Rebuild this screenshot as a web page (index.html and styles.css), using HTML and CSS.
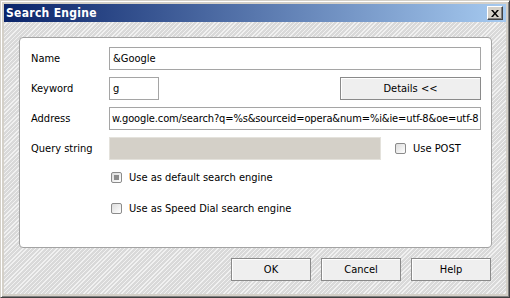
FILE: index.html
```html
<!DOCTYPE html>
<html lang="en">
<head>
  <meta charset="utf-8">
  <title>Search Engine</title>
  <link rel="stylesheet" href="styles.css">
</head>
<body>
  <div class="window">
    <div class="titlebar">
      <span class="title">Search Engine</span>
      <button class="close-button">
        <svg width="8" height="7" viewBox="0 0 8 7"><path d="M0 0h2l2 2.5L6 0h2L5 3.5 8 7H6L4 4.5 2 7H0l3-3.5z" fill="#000"/></svg>
      </button>
    </div>
    <div class="content">
      <div class="panel">
        <div class="row">
          <label class="field-label">Name</label>
          <div class="text-input wide">&amp;Google</div>
        </div>
        <div class="row">
          <label class="field-label">Keyword</label>
          <div class="text-input short">g</div>
          <button class="push-button details-button">Details &lt;&lt;</button>
        </div>
        <div class="row">
          <label class="field-label">Address</label>
          <div class="text-input wide address">w.google.com/search?q=%s&amp;sourceid=opera&amp;num=%i&amp;ie=utf-8&amp;oe=utf-8</div>
        </div>
        <div class="row">
          <label class="field-label">Query string</label>
          <div class="text-input disabled"></div>
          <span class="checkbox post-check"></span>
          <span class="check-label">Use POST</span>
        </div>
        <div class="option first-option">
          <span class="checkbox checked"></span>
          <span class="check-label">Use as default search engine</span>
        </div>
        <div class="option">
          <span class="checkbox"></span>
          <span class="check-label">Use as Speed Dial search engine</span>
        </div>
      </div>
      <div class="button-bar">
        <button class="push-button">OK</button>
        <button class="push-button">Cancel</button>
        <button class="push-button">Help</button>
      </div>
    </div>
  </div>
</body>
</html>
```
FILE: styles.css
```css
body {
  margin: 0;
  padding: 0;
  font-family: 'DejaVu Sans Condensed', 'DejaVu Sans', sans-serif;
  font-size: 11px;
  color: #000;
  background-color: #d4d0c8;
}
.window {
  width: 510px;
  height: 298px;
  box-sizing: border-box;
  display: flex;
  flex-direction: column;
  padding: 3px;
  background-color: #d4d0c8;
  border: 1px solid;
  border-color: #d4d0c8 #404040 #404040 #d4d0c8;
  box-shadow: inset 1px 1px #ffffff, inset -1px -1px #808080;
}
.titlebar {
  height: 18px;
  display: flex;
  align-items: center;
  justify-content: space-between;
  padding: 0 3px 0 2px;
  background: linear-gradient(to right, #0a246a, #a6caf0);
}
.title {
  color: #fff;
  font-weight: bold;
  font-size: 12px;
  letter-spacing: 0.3px;
}
.close-button {
  width: 16px;
  height: 14px;
  padding: 0;
  display: flex;
  align-items: center;
  justify-content: center;
  background-color: #d4d0c8;
  border: 1px solid;
  border-color: #ffffff #404040 #404040 #ffffff;
  box-shadow: inset -1px -1px #808080;
}
.content {
  flex-grow: 1;
  display: flex;
  flex-direction: column;
  padding: 15px 14px 0 15px;
  background: repeating-linear-gradient(135deg, #d9d9d9 0 2px, #f1f1f1 2px 3px);
}
.panel {
  height: 211px;
  box-sizing: border-box;
  padding: 9px 10px 0 11px;
  background-color: #fff;
  border: 1px solid #a3a3a3;
  border-radius: 4px;
}
.row {
  height: 23px;
  display: flex;
  align-items: center;
  margin-bottom: 7px;
}
.field-label {
  width: 78px;
  flex-shrink: 0;
}
.text-input {
  height: 23px;
  box-sizing: border-box;
  display: flex;
  align-items: center;
  padding: 0 3px;
  border: 1px solid #a5a5a5;
  background-color: #fff;
  white-space: nowrap;
  overflow: hidden;
}
.wide {
  flex-grow: 1;
}
.address {
  padding-left: 2px;
  letter-spacing: -0.12px;
}
.short {
  width: 50px;
}
.disabled {
  width: 272px;
  background-color: #d4d0c8;
  border-color: #e4e2dc;
}
.push-button {
  width: 80px;
  height: 23px;
  padding: 0;
  font-family: inherit;
  font-size: 11px;
  color: #000;
  background-color: #efefef;
  border: 1px solid #8a8a8a;
  box-shadow: inset 1px 1px #ffffff;
}
.details-button {
  width: 141px;
  margin-left: auto;
}
.checkbox {
  width: 11px;
  height: 11px;
  box-sizing: border-box;
  flex-shrink: 0;
  border: 1px solid #8b8b8b;
  border-radius: 2px;
  background: linear-gradient(135deg, #dcdcdc, #ffffff);
}
.checked {
  position: relative;
}
.checked::after {
  content: "";
  position: absolute;
  left: 2px;
  top: 2px;
  width: 5px;
  height: 5px;
  background-color: #8c8c8c;
}
.post-check {
  margin-left: 14px;
}
.check-label {
  margin-left: 7px;
}
.option {
  display: flex;
  align-items: center;
  height: 14px;
  margin-left: 80px;
  margin-bottom: 17px;
}
.first-option {
  margin-top: 10px;
}
.button-bar {
  display: flex;
  justify-content: flex-end;
  gap: 10px;
  margin-top: 10px;
  padding-right: 1px;
}
```
